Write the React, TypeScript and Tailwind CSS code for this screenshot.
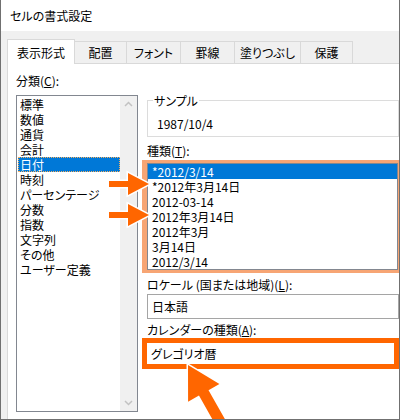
import React from 'react';

const categories = ['標準', '数値', '通貨', '会計', '日付', '時刻', 'パーセンテージ', '分数', '指数', '文字列', 'その他', 'ユーザー定義'];
const types = ['*2012/3/14', '*2012年3月14日', '2012-03-14', '2012年3月14日', '2012年3月', '3月14日', '2012/3/14'];
const tabs = [
  { label: '配置', w: 'w-[52px]' },
  { label: 'フォント', w: 'w-[54px]' },
  { label: '罫線', w: 'w-[54px]' },
  { label: '塗りつぶし', w: 'w-[66px]' },
  { label: '保護', w: 'w-[52px]' },
];

// small right-pointing arrow, tip at (148, y)
const sideArrow = (y: number) =>
  `M108 ${y - 3} H127 V${y - 11} L148 ${y} L127 ${y + 11} V${y + 3} H108 Z`;

const App: React.FC = () => {
  return (
    <div className="relative w-[400px] h-[420px] overflow-hidden bg-[#f0f0f0] border-x border-b border-[#707070] text-[12px] text-black leading-[15px] font-['Noto_Sans_CJK_JP','Noto_Sans',sans-serif] [font-feature-settings:'palt']">
      {/* Title bar */}
      <div className="h-[31px] bg-white flex items-center pl-[9px] text-[12px]">セルの書式設定</div>

      {/* Tabs */}
      <div className="h-[32px] flex items-end pl-[6px]">
        <div className="w-[68px] h-[25px] bg-white border-x border-t border-[#d9d9d9] -mb-px relative z-10 flex items-center justify-center">
          表示形式
        </div>
        {tabs.map(t => (
          <div key={t.label} className={`${t.w} h-[22px] border-t border-r border-[#d9d9d9] flex items-center justify-center`}>
            {t.label}
          </div>
        ))}
      </div>

      {/* Tab page */}
      <div className="ml-[6px] h-[360px] bg-white border-l border-t border-[#d9d9d9] pl-[8px] pt-[9px] flex">
        {/* Left column */}
        <div className="w-[122px] shrink-0">
          <div>
            分類(<span className="underline">C</span>):
          </div>
          <div className="mt-[7px] h-[317px] border border-[#828790] flex">
            <div className="flex-1 pt-px pl-px">
              {categories.map(c => (
                <div
                  key={c}
                  className={
                    c === '日付'
                      ? 'h-[15px] pl-[2px] bg-[#0078d7] text-white outline outline-1 outline-dotted outline-[#f5b060] -outline-offset-1'
                      : 'h-[15px] pl-[2px]'
                  }
                >
                  {c}
                </div>
              ))}
            </div>
            <div className="w-[17px] bg-[#f0f0f0] flex flex-col items-center justify-between py-[5px]">
              <svg width="9" height="6" viewBox="0 0 9 6">
                <path d="M1 5 L4.5 1.5 L8 5" fill="none" stroke="#c2c2c2" strokeWidth="1.5" />
              </svg>
              <svg width="9" height="6" viewBox="0 0 9 6">
                <path d="M1 1 L4.5 4.5 L8 1" fill="none" stroke="#c2c2c2" strokeWidth="1.5" />
              </svg>
            </div>
          </div>
        </div>

        {/* Right column */}
        <div className="ml-[9px] flex-1">
          <div className="relative mt-[27px] h-[37px] border border-[#dcdcdc] pl-[9px] pt-[15px]">
            <span className="absolute -top-[8px] left-[5px] bg-white px-px">サンプル</span>
            1987/10/4
          </div>

          <div className="mt-[6px]">
            種類(<span className="underline">T</span>):
          </div>
          <div className="-ml-[5px] mt-[2px] border-t-[3px] border-b-[3px] border-l-[5px] border-r-[1px] border-[#f7a574]">
            <div className="border border-[#828790]">
              {types.map((t, i) => (
                <div
                  key={i}
                  className={i === 0 ? 'h-[15px] pl-[4px] bg-[#0078d7] text-white' : 'h-[15px] pl-[4px]'}
                >
                  {t}
                </div>
              ))}
            </div>
          </div>

          <div className="mt-[4px]">
            ロケール (国または地域)(<span className="underline">L</span>):
          </div>
          <div className="mt-[2px] h-[25px] border border-[#a5a5a5] pl-[4px] flex items-center">日本語</div>

          <div className="mt-[3px]">
            カレンダーの種類(<span className="underline">A</span>):
          </div>
          <div className="-ml-[5px] mt-[1px] h-[31px] border-[5px] border-[#ff6600] pl-[4px] flex items-center">
            グレゴリオ暦
          </div>
        </div>
      </div>

      {/* Arrow annotations */}
      <svg className="absolute inset-0 pointer-events-none" width="400" height="420" viewBox="0 0 400 420">
        <g fill="#ff6600" stroke="#ffffff" strokeWidth="3" strokeLinejoin="miter" style={{ paintOrder: 'stroke' }}>
          <path d={sideArrow(184)} />
          <path d={sideArrow(215)} />
          <path
            transform="translate(187 365) rotate(-29.5)"
            d="M0 0 L18 32 L5.5 32 L5.5 90 L-5.5 90 L-5.5 32 L-18 32 Z"
          />
        </g>
      </svg>
    </div>
  );
};

export default App;
